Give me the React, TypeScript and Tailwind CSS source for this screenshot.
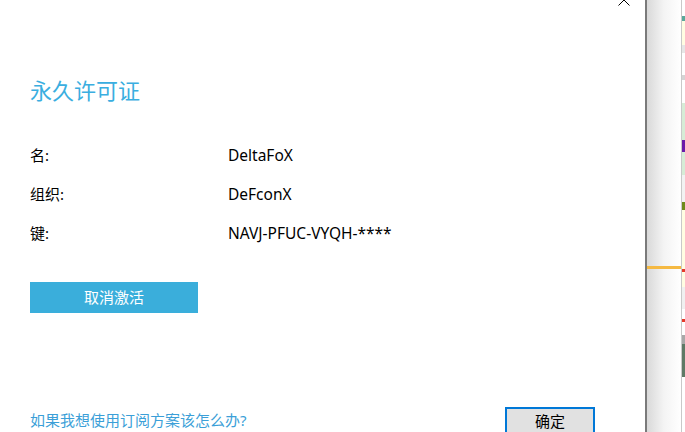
import React from "react";

const font = { fontFamily: '"Noto Sans", "Noto Sans CJK SC", sans-serif' };

function Row({ label, value }: { label: string; value: string }) {
  return (
    <div className="flex h-[39px] items-center text-[15px] text-black">
      <div className="w-[198px]">{label}</div>
      <div className="text-[15.5px]">{value}</div>
    </div>
  );
}

export default function App() {
  const strip: [number, string][] = [
    [16, "#ffffff"],
    [5, "#5aa89a"],
    [24, "#fffde2"],
    [8, "#e6e6e6"],
    [22, "#ffffff"],
    [5, "#d4d4d4"],
    [23, "#ffffff"],
    [37, "#d6ecd6"],
    [12, "#6a1aa8"],
    [23, "#d6ecd6"],
    [27, "#f2f2f2"],
    [8, "#6f8a1a"],
    [59, "#fffde2"],
    [3, "#e53a2a"],
    [15, "#fffde2"],
    [22, "#f0f0f0"],
    [10, "#ffffff"],
    [3, "#e53a2a"],
    [13, "#ffffff"],
    [9, "#a8a8a8"],
    [33, "#5f7a66"],
    [42, "#ffffff"],
  ];
  return (
    <div className="flex h-[432px] w-[685px] overflow-hidden bg-white" style={font}>
      <div className="relative flex w-[647px] shrink-0 flex-col border-r-2 border-[#7a7a7a] bg-white pl-[30px]">
        <svg className="absolute left-[618px] top-[-6px]" width="12" height="12" viewBox="0 0 12 12">
          <path d="M0.5 0.5 L11.5 11.5 M11.5 0.5 L0.5 11.5" stroke="#000" strokeWidth="1" fill="none" />
        </svg>
        <div className="mt-[75px] text-[22px] leading-[30px] text-[#3aaee0]">永久许可证</div>
        <div className="mt-[31px] flex flex-col">
          <Row label="名:" value="DeltaFoX" />
          <Row label="组织:" value="DeFconX" />
          <Row label="键:" value="NAVJ-PFUC-VYQH-****" />
        </div>
        <button className="mt-[29px] flex h-[31px] w-[168px] items-center justify-center bg-[#3aaedb] text-[15px] text-white">
          取消激活
        </button>
        <div className="mt-auto flex items-end justify-between pr-[50px]">
          <div className="mb-[2px] text-[15px] leading-[20px] text-[#3b9fd8]">如果我想使用订阅方案该怎么办?</div>
          <button className="flex h-[25px] w-[90px] items-center justify-center border-2 border-b-0 border-[#0078d7] bg-[#e1e1e1] pt-[1px] text-[15px] text-black">
            确定
          </button>
        </div>
      </div>
      <div className="relative w-[34px] shrink-0 bg-gradient-to-r from-[#d9d9d9] via-[#f4f4f4] to-white">
        <div className="absolute left-0 top-[266px] h-[3px] w-[34px] bg-[#f5b942]" />
      </div>
      <div className="w-px shrink-0 bg-[#c9c9c9]" />
      <div className="flex w-[3px] shrink-0 flex-col">
        {strip.map(([h, c], i) => (
          <div key={i} style={{ height: h, background: c }} />
        ))}
      </div>
    </div>
  );
}
